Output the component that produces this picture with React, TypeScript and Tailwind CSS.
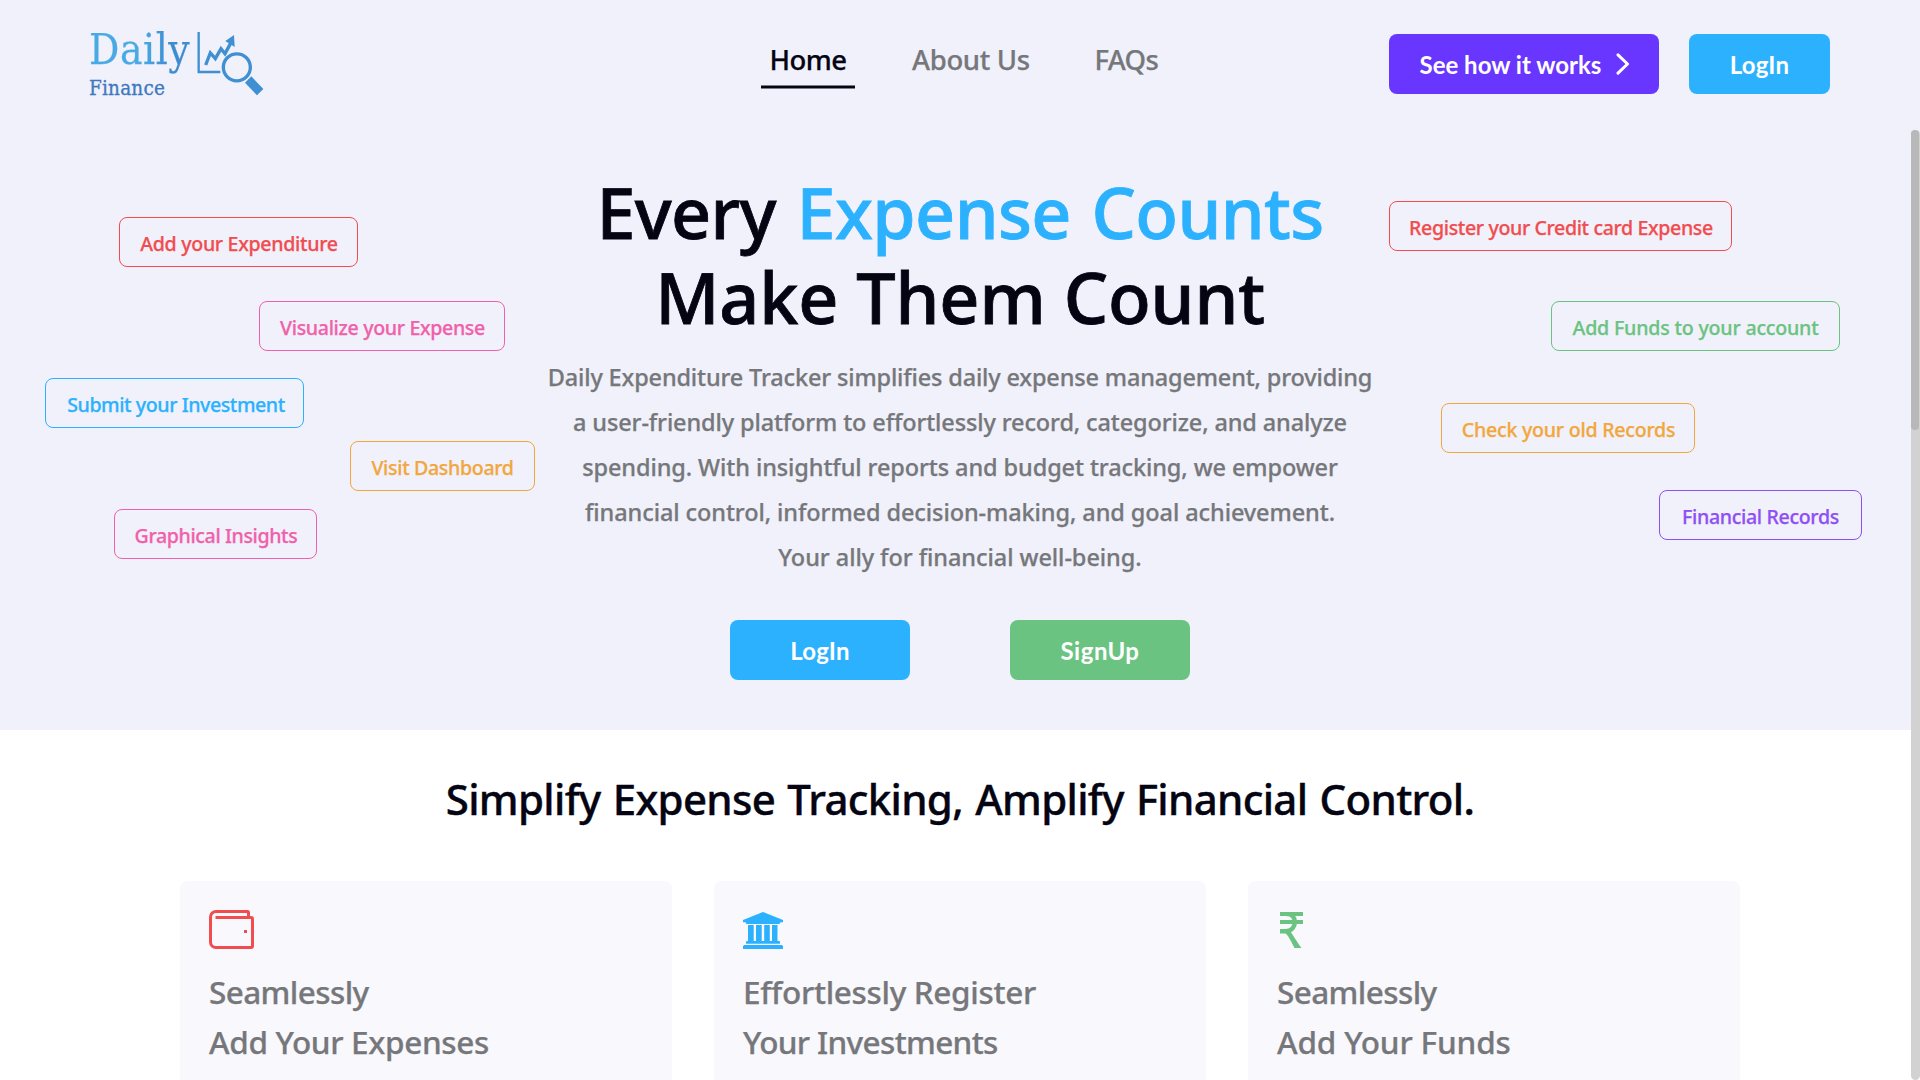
import type { ReactNode } from "react";

type Chip = { label: string; place: string };

const chips: Chip[] = [
  { label: "Add your Expenditure", place: "left-[119px] top-[87px] w-[239px] pl-px text-[#f14d50] tracking-[-0.32px]" },
  { label: "Visualize your Expense", place: "left-[259px] top-[171px] w-[246px] pl-px text-[#f160ab] tracking-[-0.35px]" },
  { label: "Submit your Investment", place: "left-[45px] top-[248px] w-[259px] pl-[3px] text-[#2cb1ff] tracking-[-0.43px]" },
  { label: "Visit Dashboard", place: "left-[350px] top-[311px] w-[185px] text-[#f2a73d] tracking-[-0.35px]" },
  { label: "Graphical Insights", place: "left-[114px] top-[379px] w-[203px] pl-px text-[#f160ab] tracking-[-0.39px]" },
  { label: "Register your Credit card Expense", place: "left-[1389px] top-[71px] w-[343px] pl-px text-[#f14d50] tracking-[-0.38px]" },
  { label: "Add Funds to your account", place: "left-[1551px] top-[171px] w-[289px] text-[#6bc381] tracking-[-0.2px]" },
  { label: "Check your old Records", place: "left-[1441px] top-[273px] w-[254px] pl-px text-[#f2a73d] tracking-[-0.25px]" },
  { label: "Financial Records", place: "left-[1659px] top-[360px] w-[203px] text-[#8f4ff5] tracking-[-0.35px]" },
];

function Logo() {
  return (
    <div className="flex h-[130px] w-[671px] pl-[89px] pt-[25px]">
      <div className="flex w-[108px] flex-col whitespace-nowrap font-['DejaVu_Serif_Condensed','DejaVu_Serif',serif] [font-stretch:condensed]">
        <span className="bg-gradient-to-r from-[#48a9e4] from-50% to-[#3c8ccf] to-75% bg-clip-text text-[42px] leading-[50px] tracking-[0.6px] text-transparent">
          Daily
        </span>
        <span className="mt-px text-[20.5px] leading-6 tracking-[0.2px] text-[#3f78c0] [-webkit-text-stroke:0.3px_currentColor]">
          Finance
        </span>
      </div>
      <svg className="mt-[5px] h-[67px] w-[67px] shrink-0" viewBox="380 60 201 201" fill="none">
        <path d="M385 66V186H450" stroke="#3f90d2" strokeWidth="7" />
        <path d="M406 165L420 129L435 146L452 116L464 131L484 94" stroke="#3f90d2" strokeWidth="10" />
        <path d="M491 75L493 111L465 93Z" fill="#3f90d2" />
        <circle cx="499.500" cy="172" r="40.500" stroke="#3f90d2" strokeWidth="10" />
        <path d="M543 199L579 237L560 256L524 218Z" fill="#3f90d2" />
      </svg>
    </div>
  );
}

function Header() {
  return (
    <header className="flex h-[130px] items-start bg-[#f0f1fa]">
      <Logo />
      <nav className="flex pt-10 pl-[90px] text-[27.5px] leading-10 text-[#76777b]">
        <div className="flex w-[94px] flex-col items-center text-[#040412]">
          <span className="tracking-[-0.6px]">Home</span>
          <span className="mt-[5px] h-1 w-full border-y border-[#7a7b87] bg-[#040412]" />
        </div>
        <span className="ml-[57px] w-[137px] tracking-[-0.34px]">About Us</span>
        <span className="ml-[45.5px] tracking-[-0.7px]">FAQs</span>
      </nav>
      <div className="ml-auto mr-[90px] flex gap-[30px] pt-[34px] font-[Lato,sans-serif] text-2xl font-bold text-white [-webkit-text-stroke:0]">
        <button className="flex h-[60px] w-[270px] items-center rounded-lg bg-[#6936ff] pl-[30.5px] pt-[2px]">
          <span>See how it works</span>
          <svg className="mb-[3px] ml-[15px] h-[22px] w-[14px]" viewBox="0 0 14 22" fill="none">
            <path d="M2 1.800L11.500 11L2 20.200" stroke="white" strokeWidth="3" strokeLinecap="round" strokeLinejoin="round" />
          </svg>
        </button>
        <button className="h-[60px] w-[141px] rounded-lg bg-[#2cb1ff] pt-[2px] tracking-[0.2px]">LogIn</button>
      </div>
    </header>
  );
}

function Hero() {
  return (
    <section className="relative flex h-[600px] flex-col items-center bg-[#f0f1fa]">
      {chips.map((c) => (
        <div
          key={c.label}
          className={`absolute flex h-[50px] items-center justify-center rounded-lg border border-current pt-[3px] text-[19.6px] whitespace-nowrap ${c.place}`}
        >
          {c.label}
        </div>
      ))}
      <h1 className="mt-10 text-center text-[70px] leading-[85px] text-[#040412] [-webkit-text-stroke:0.8px_currentColor]">
        <div className="tracking-[-0.62px] [word-spacing:3px]">
          Every <span className="text-[#2cb1ff] [-webkit-text-stroke:0.8px_#2cb1ff]">Expense Counts</span>
        </div>
        <div className="tracking-[-0.12px]">Make Them Count</div>
      </h1>
      <p className="mt-[15px] text-center text-[23.5px] leading-[45px] tracking-[-0.13px] text-[#76777b]">
        <span className="tracking-[-0.16px]">Daily Expenditure Tracker simplifies daily expense management, providing</span>
        <br />a user-friendly platform to effortlessly record, categorize, and analyze
        <br />
        <span className="tracking-[-0.1px]">spending. With insightful reports and budget tracking, we empower</span>
        <br />
        <span className="tracking-[-0.09px]">financial control, informed decision-making, and goal achievement.</span>
        <br />
        <span className="tracking-[-0.06px]">Your ally for financial well-being.</span>
      </p>
      <div className="mt-10 flex gap-[100px] font-[Lato,sans-serif] text-2xl font-bold text-white [-webkit-text-stroke:0]">
        <button className="h-[60px] w-[180px] rounded-lg bg-[#2cb1ff] pt-[2px] tracking-[0.2px]">LogIn</button>
        <button className="h-[60px] w-[180px] rounded-lg bg-[#6bc381] pt-[2px] tracking-[0.5px]">SignUp</button>
      </div>
    </section>
  );
}

function WalletIcon() {
  return (
    <svg className="h-[39px] w-[45px]" viewBox="0 0 45 39" fill="none" stroke="#f14d50" strokeWidth="3">
      <path d="M6.500 7.500H42a1.500 1.500 0 0 1 1.500 1.500V36a1.500 1.500 0 0 1-1.500 1.500H7A5.500 5.500 0 0 1 1.500 32V7A5.500 5.500 0 0 1 7 1.500H38.500a1 1 0 0 1 1 1V7" />
      <rect x="35" y="20" width="3" height="3" fill="#f14d50" stroke="none" />
    </svg>
  );
}

function BankIcon() {
  return (
    <svg className="mt-[2px] h-[37px] w-10" viewBox="0 0 40 37" fill="#2cb1ff">
      <path d="M20 0L40 8V10.300H37.500L36.500 12H3.500L2.500 10.300H0V8Z" />
      <path d="M5 13h5.700v16H5zM13 13h5.700v16H13zM21.200 13h5.600v16h-5.600zM29 13h5.500v16H29z" />
      <path d="M3 29.700L3.700 29H36.300L37 29.700V31.700H3zM0 34.200L1 33H39L40 34.200V37H0z" />
    </svg>
  );
}

function RupeeIcon() {
  return (
    <svg className="ml-[3px] mt-[2px] h-9 w-[23px]" viewBox="0 0 23 36" fill="none">
      <path d="M0 0H23V4H0zM0 8H23V12H0z" fill="#6bc381" />
      <path d="M7 2C12 2 14.800 5.500 14.800 10S12 19.200 5.500 19.200H0" stroke="#6bc381" strokeWidth="4.500" />
      <path d="M4 20.500L10 18.800C12.500 22.500 17 30 21.500 36H14.500C11.500 30.500 8 22 4 20.500Z" fill="#6bc381" />
    </svg>
  );
}

function Card({ icon, children }: { icon: ReactNode; children: ReactNode }) {
  return (
    <article className="h-[300px] w-[492px] rounded-lg bg-[#f8f8fd] pl-[29px] pt-[29px] text-[31.5px] leading-[50px] text-[#76777b]">
      <div className="flex h-[57px] items-start">{icon}</div>
      {children}
    </article>
  );
}

export default function App() {
  return (
    <div className="relative h-[1080px] w-[1920px] overflow-hidden bg-white font-['Noto_Sans',sans-serif] font-medium [-webkit-text-stroke:0.25px_currentColor]">
      <Header />
      <Hero />
      <section className="flex flex-col items-center">
        <h2 className="mt-[39px] text-[42px] leading-[60px] tracking-[-0.68px] text-[#040412] [word-spacing:2px] [-webkit-text-stroke:0.4px_currentColor]">
          Simplify Expense Tracking, Amplify Financial Control.
        </h2>
        <div className="mt-[52px] flex gap-[42px]">
          <Card icon={<WalletIcon />}>
            <p className="tracking-[-0.6px]">Seamlessly</p>
            <p className="tracking-[-0.35px]">Add Your Expenses</p>
          </Card>
          <Card icon={<BankIcon />}>
            <p className="tracking-[-0.34px]">Effortlessly Register</p>
            <p className="tracking-[-0.66px]">Your Investments</p>
          </Card>
          <Card icon={<RupeeIcon />}>
            <p className="tracking-[-0.6px]">Seamlessly</p>
            <p className="tracking-[-0.18px]">Add Your Funds</p>
          </Card>
        </div>
      </section>
      <div className="absolute right-0 top-[130px] h-[950px] w-[9px] rounded-md bg-[#d2d2d2]">
        <div className="h-[300px] w-2 rounded-md bg-[#b9b8b8]" />
      </div>
    </div>
  );
}
